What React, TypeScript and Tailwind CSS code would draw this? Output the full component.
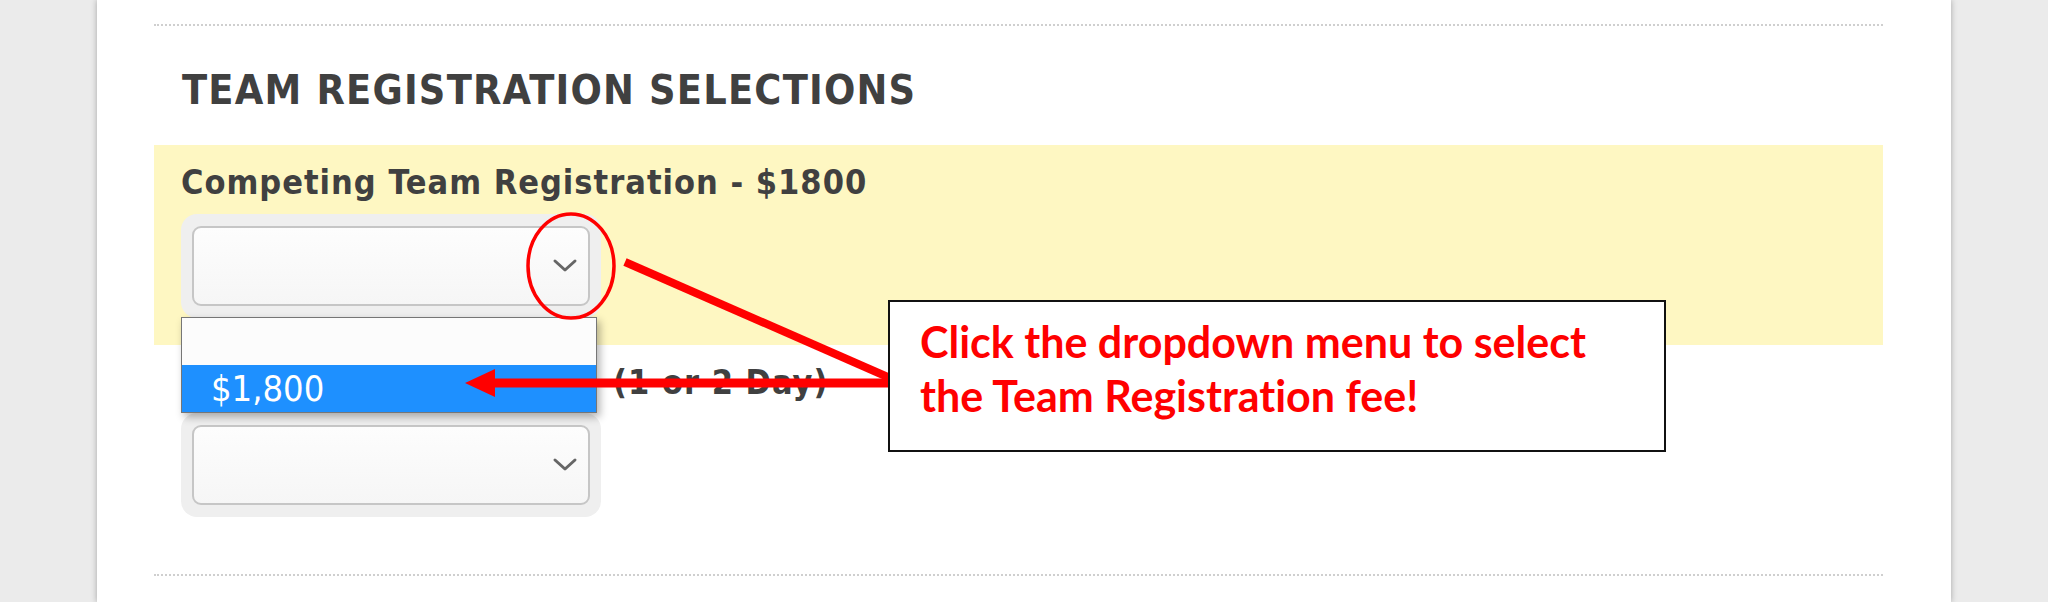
import React from 'react';

const heading = { fontFamily: '"DejaVu Sans Condensed", "DejaVu Sans", sans-serif' };

const Chevron = () => (
  <svg width="26" height="16" viewBox="0 0 26 16" className="block">
    <polyline points="3,3 13,12 23,3" fill="none" stroke="#666" strokeWidth="3" strokeLinecap="round" strokeLinejoin="round" />
  </svg>
);

const SelectBox = ({ children }: { children?: React.ReactNode }) => (
  <div className="relative w-[420px] h-[104px] p-[11px] pt-[12px] rounded-[16px] bg-[#efefef]">
    <div className="h-[80px] rounded-[9px] border-2 border-[#c6c6c6] bg-gradient-to-b from-[#fdfdfd] to-[#f6f6f6] flex items-center justify-end pr-[10px]">
      <Chevron />
    </div>
    {children}
  </div>
);

export default function App() {
  return (
    <div className="relative w-full h-[602px] overflow-hidden bg-[#ebebeb]">
      <div className="mx-auto w-[1854px] h-full bg-white shadow-[0_0_6px_rgba(0,0,0,0.3)]">
        <div className="ml-[57px] w-[1729px] pt-[24px]" style={heading}>
          <div className="border-t-2 border-dotted border-[#cfcfcf]" />

          <h2 className="mt-[44px] pl-[28px] text-[41px] leading-[40px] font-bold tracking-[1.2px] text-[#404040]">
            TEAM REGISTRATION SELECTIONS
          </h2>

          <div className="mt-[35px] h-[200px] bg-[#fef7c2] pl-[27px] pt-[20px]">
            <div className="text-[34px] leading-[34px] font-bold tracking-[1px] text-[#404040]">
              Competing Team Registration - $1800
            </div>
            <div className="mt-[15px]">
              <SelectBox>
                <div className="absolute left-0 top-[103px] z-10 w-[416px] border border-[#767676] bg-[#fcfcfc] shadow-[3px_4px_8px_rgba(0,0,0,0.3)]">
                  <div className="h-[47px]" />
                  <div className="h-[47px] bg-[#1e90ff] pl-[29px] text-[36px] leading-[47px] text-white">$1,800</div>
                </div>
              </SelectBox>
            </div>
          </div>

          <div className="pl-[27px] pt-[20px]">
            <div className="flex text-[34px] leading-[34px] font-bold tracking-[1px] text-[#404040] whitespace-nowrap">
              <span className="inline-block w-[432px]" />
              <span>(1 or 2 Day)</span>
            </div>
            <div className="mt-[14px]">
              <SelectBox />
            </div>
          </div>

          <div className="mt-[57px] border-t-2 border-dotted border-[#cfcfcf]" />
        </div>
      </div>

      <svg className="absolute inset-0 pointer-events-none z-20" width="2048" height="602" viewBox="0 0 2048 602">
        <ellipse cx="571" cy="266" rx="43" ry="52" fill="none" stroke="#ff0000" strokeWidth="3.5" />
        <line x1="625" y1="262" x2="890" y2="378" stroke="#ff0000" strokeWidth="8" />
        <line x1="890" y1="383" x2="490" y2="383" stroke="#ff0000" strokeWidth="9" />
        <polygon points="465,383 495,369 495,397" fill="#ff0000" />
      </svg>

      <div
        className="absolute left-[888px] top-[300px] z-30 w-[778px] h-[152px] border-2 border-[#111] bg-white pl-[30px] pt-[13px] text-[43px] leading-[54px] font-bold text-[#ff0000] [font-variant-ligatures:none]"
        style={{ fontFamily: 'Lato, "Open Sans", sans-serif' }}
      >
        <div>Click the dropdown menu to select</div>
        <div>the Team Registration fee!</div>
      </div>
    </div>
  );
}
